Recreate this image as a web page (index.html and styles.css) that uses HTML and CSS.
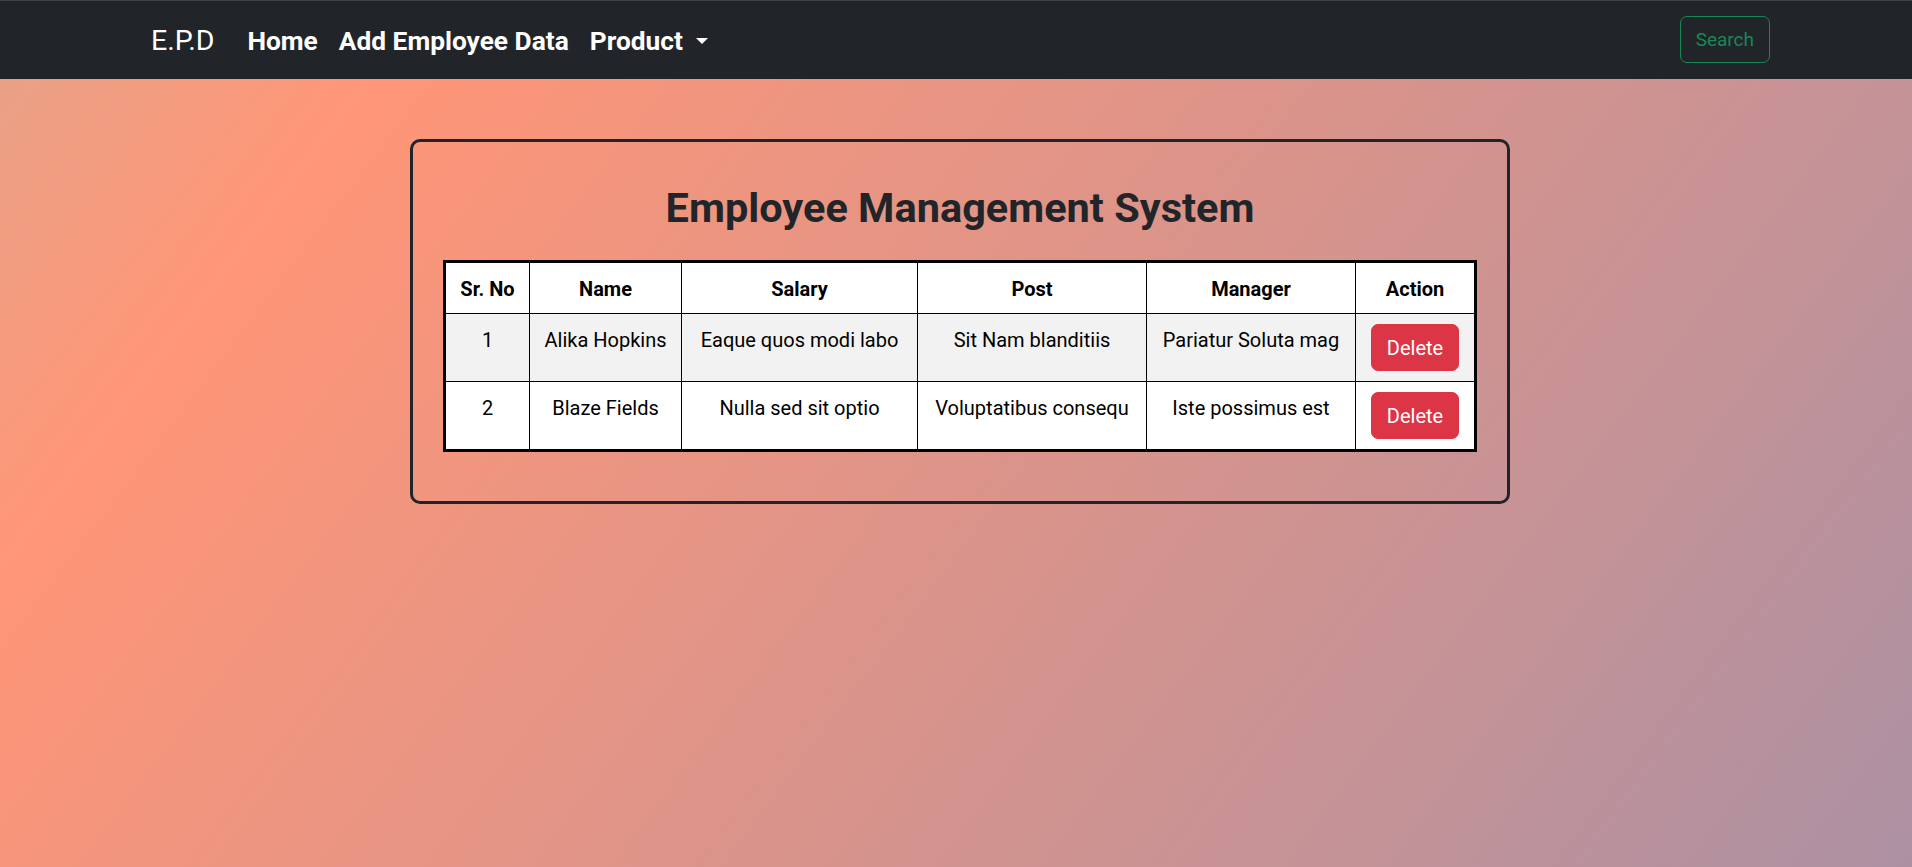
FILE: index.html
```html
<!DOCTYPE html>
<html lang="en">
<head>
<meta charset="utf-8">
<title>Employee Management System</title>
<link rel="stylesheet" href="styles.css">
</head>
<body>
<nav class="navbar">
  <a class="brand" href="#">E.P.D</a>
  <ul class="nav-links">
    <li><a class="nav-link" href="#">Home</a></li>
    <li><a class="nav-link" href="#">Add Employee Data</a></li>
    <li><a class="nav-link" href="#">Product<span class="caret"></span></a></li>
  </ul>
  <button class="btn-search" type="button">Search</button>
</nav>

<main class="card">
  <h1 class="title">Employee Management System</h1>
  <table class="emp-table">
    <thead>
      <tr>
        <th class="col-sr">Sr. No</th>
        <th class="col-name">Name</th>
        <th class="col-salary">Salary</th>
        <th class="col-post">Post</th>
        <th class="col-manager">Manager</th>
        <th class="col-action">Action</th>
      </tr>
    </thead>
    <tbody>
      <tr class="row-striped">
        <td>1</td>
        <td>Alika Hopkins</td>
        <td>Eaque quos modi labo</td>
        <td>Sit Nam blanditiis</td>
        <td>Pariatur Soluta mag</td>
        <td class="cell-action"><button class="btn-delete" type="button">Delete</button></td>
      </tr>
      <tr>
        <td>2</td>
        <td>Blaze Fields</td>
        <td>Nulla sed sit optio</td>
        <td>Voluptatibus consequ</td>
        <td>Iste possimus est</td>
        <td class="cell-action"><button class="btn-delete" type="button">Delete</button></td>
      </tr>
    </tbody>
  </table>
</main>
</body>
</html>
```
FILE: styles.css
```css
* {
  box-sizing: border-box;
}

html {
  height: 100%;
}

body {
  margin: 0;
  min-height: 100%;
  font-family: Roboto, "Liberation Sans", Arial, sans-serif;
  background: linear-gradient(127deg, #e6a288 0%, #ff9677 17%, #ad91a3 100%);
}

/* ---------- navbar ---------- */
.navbar {
  height: 79px;
  background: #212529;
  border-top: 1px solid #3d4145;
  display: flex;
  align-items: center;
  padding: 0 142px 0 151px;
}

.brand {
  font-size: 28.5px;
  font-weight: 400;
  color: #fff;
  text-decoration: none;
  margin-right: 33px;
  padding-top: 1px;
}

.nav-links {
  display: flex;
  align-items: center;
  gap: 21px;
  list-style: none;
  margin: 0;
  padding: 2px 0 0;
}

.nav-link {
  font-size: 26.3px;
  font-weight: 700;
  color: #fff;
  text-decoration: none;
}

.caret {
  display: inline-block;
  margin-left: 13px;
  vertical-align: 6.5px;
  border-top: 6.5px solid #fff;
  border-left: 6.5px solid transparent;
  border-right: 6.5px solid transparent;
}

.btn-search {
  margin-left: auto;
  margin-top: -1px;
  font-family: inherit;
  font-size: 19px;
  line-height: 30px;
  padding: 7.5px 15px;
  color: #198754;
  background: transparent;
  border: 1px solid #198754;
  border-radius: 7px;
}

/* ---------- card ---------- */
.card {
  display: block;
  width: 1100px;
  margin: 60px 0 0 calc(50% - 546px);
  border: 3px solid #212529;
  border-radius: 10px;
  padding: 30px 30px 49px;
}

.title {
  margin: 11px 0 28px;
  font-size: 41.5px;
  line-height: 49px;
  font-weight: 700;
  text-align: center;
  color: #212529;
}

/* ---------- table ---------- */
.emp-table {
  width: 100%;
  table-layout: fixed;
  border-collapse: collapse;
  border: 3px solid #000;
  background: #fff;
  color: #000;
  font-size: 20px;
  line-height: 30px;
  text-align: center;
}

.emp-table th,
.emp-table td {
  border: 1px solid #000;
  padding: 11px 6px 9px;
  vertical-align: top;
}

.emp-table th {
  font-weight: 700;
}

.col-sr { width: 85px; }
.col-name { width: 152px; }
.col-salary { width: 236px; }
.col-post { width: 229px; }
.col-manager { width: 209px; }

.row-striped td {
  background: #f2f2f2;
}

.emp-table .cell-action {
  padding: 10px 6px;
}

.btn-delete {
  font-family: inherit;
  font-size: 20px;
  line-height: 30px;
  padding: 7.5px 15px;
  color: #fff;
  background: #dc3545;
  border: 1px solid #dc3545;
  border-radius: 7px;
}
```
